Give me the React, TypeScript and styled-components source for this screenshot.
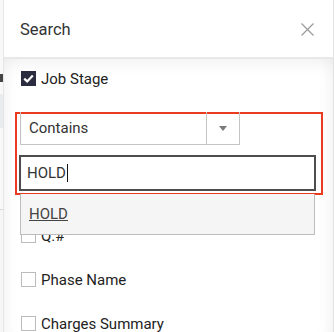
import React from "react";
import styled, { createGlobalStyle } from "styled-components";

const Global = createGlobalStyle`
  body {
    margin: 0;
    background: #ffffff;
    font-family: Roboto, "Liberation Sans", sans-serif;
  }
`;

const Page = styled.div`
  display: flex;
  height: 332px;
  width: 335px;
  overflow: hidden;
`;

const Behind = styled.div`
  width: 3px;
  flex: none;
  display: flex;
  flex-direction: column;
  background: #f6f6f6;
`;

const BehindBit = styled.div<{ h: number; c: string }>`
  height: ${(p) => p.h}px;
  background: ${(p) => p.c};
  flex: none;
`;

const Panel = styled.div`
  width: 329px;
  flex: none;
  display: flex;
  flex-direction: column;
  background: #fff;
  border-left: 1px solid #e6e6e6;
  border-right: 1px solid #e3e3e3;
`;

const Header = styled.div`
  height: 55px;
  flex: none;
  display: flex;
  align-items: center;
  justify-content: space-between;
  padding: 2px 19px 0 16px;
  border-bottom: 2px solid #e8e8e8;
`;

const Title = styled.span`
  font-size: 16.5px;
  color: #333;
`;

const Body = styled.div`
  flex: 1;
  padding: 12px 0 0 17px;
  box-shadow: inset 0 10px 22px -12px rgba(0, 0, 0, 0.1),
    inset -14px 0 18px -14px rgba(0, 0, 0, 0.06),
    inset 14px 0 18px -14px rgba(0, 0, 0, 0.05);
`;

const Row = styled.label<{ gap?: number }>`
  display: flex;
  align-items: center;
  gap: 5px;
  height: 15px;
  margin-top: ${(p) => p.gap ?? 0}px;
  font-size: 15px;
  color: #222;
`;

const Box = styled.span<{ checked?: boolean }>`
  width: 15px;
  height: 15px;
  box-sizing: border-box;
  flex: none;
  display: flex;
  align-items: center;
  justify-content: center;
  border: ${(p) => (p.checked ? "none" : "1px solid #bcbcbc")};
  background: ${(p) => (p.checked ? "#2b2c3f" : "#fff")};
`;

const Filter = styled.div`
  position: relative;
  margin: 26px 0 0 -6px;
  width: 297px;
  border: 2px solid #ea3a1f;
  padding: 0 5px 2px 2px;
  display: flex;
  flex-direction: column;
  gap: 10px;
`;

const Select = styled.div`
  width: 220px;
  height: 33px;
  margin: -2px 0 0 1px;
  box-sizing: border-box;
  display: flex;
  border: 1px solid #c4c4c4;
  border-top: none;
  font-size: 15px;
  color: #333;
`;

const SelectValue = styled.div`
  flex: 1;
  display: flex;
  align-items: center;
  padding-left: 8px;
`;

const SelectArrow = styled.div`
  width: 32px;
  border-left: 1px solid #c4c4c4;
  display: flex;
  align-items: center;
  justify-content: center;
  &::after {
    content: "";
    border-left: 4px solid transparent;
    border-right: 4px solid transparent;
    border-top: 5px solid #7a7a7a;
  }
`;

const TextBox = styled.div`
  height: 36px;
  box-sizing: border-box;
  border: 2px solid #4d4d4d;
  display: flex;
  align-items: center;
  padding-left: 6px;
  font-size: 15px;
  color: #333;
`;

const Caret = styled.span`
  width: 1px;
  height: 18px;
  background: #111;
  margin-left: 1px;
`;

const Options = styled.div`
  position: absolute;
  top: calc(100% + 1px);
  left: 3px;
  width: 295px;
  height: 41px;
  box-sizing: border-box;
  background: #f5f5f5;
  border: 1px solid #bdbdbd;
  border-top: none;
  display: flex;
  align-items: center;
  padding-left: 8px;
  font-size: 15px;
  color: #444;
  text-decoration: underline;
  z-index: 2;
`;

const Close = styled.svg`
  width: 13px;
  height: 13px;
`;

function Check() {
  return (
    <svg width="11" height="9" viewBox="0 0 11 9">
      <path d="M1.2 4.6 L4.2 7.4 L9.8 1.4" fill="none" stroke="#fff" strokeWidth="2.2" />
    </svg>
  );
}

export default function App() {
  return (
    <Page>
      <Global />
      <Behind>
        <BehindBit h={74} c="#f8f8f8" />
        <BehindBit h={8} c="#444" />
        <BehindBit h={12} c="#f8f8f8" />
        <BehindBit h={34} c="#e9ebef" />
        <BehindBit h={81} c="#f8f8f8" />
        <BehindBit h={1} c="#dadada" />
      </Behind>
      <Panel>
        <Header>
          <Title>Search</Title>
          <Close viewBox="0 0 13 13">
            <path d="M0.5 0.5 L12.5 12.5 M12.5 0.5 L0.5 12.5" stroke="#9a9a9a" strokeWidth="1.2" />
          </Close>
        </Header>
        <Body>
          <Row>
            <Box checked>
              <Check />
            </Box>
            Job Stage
          </Row>
          <Filter>
            <Select>
              <SelectValue>Contains</SelectValue>
              <SelectArrow />
            </Select>
            <TextBox>
              HOLD
              <Caret />
            </TextBox>
            <Options>HOLD</Options>
          </Filter>
          <Row gap={33}>
            <Box />
            Q.#
          </Row>
          <Row gap={29}>
            <Box />
            Phase Name
          </Row>
          <Row gap={29}>
            <Box />
            Charges Summary
          </Row>
        </Body>
      </Panel>
    </Page>
  );
}
